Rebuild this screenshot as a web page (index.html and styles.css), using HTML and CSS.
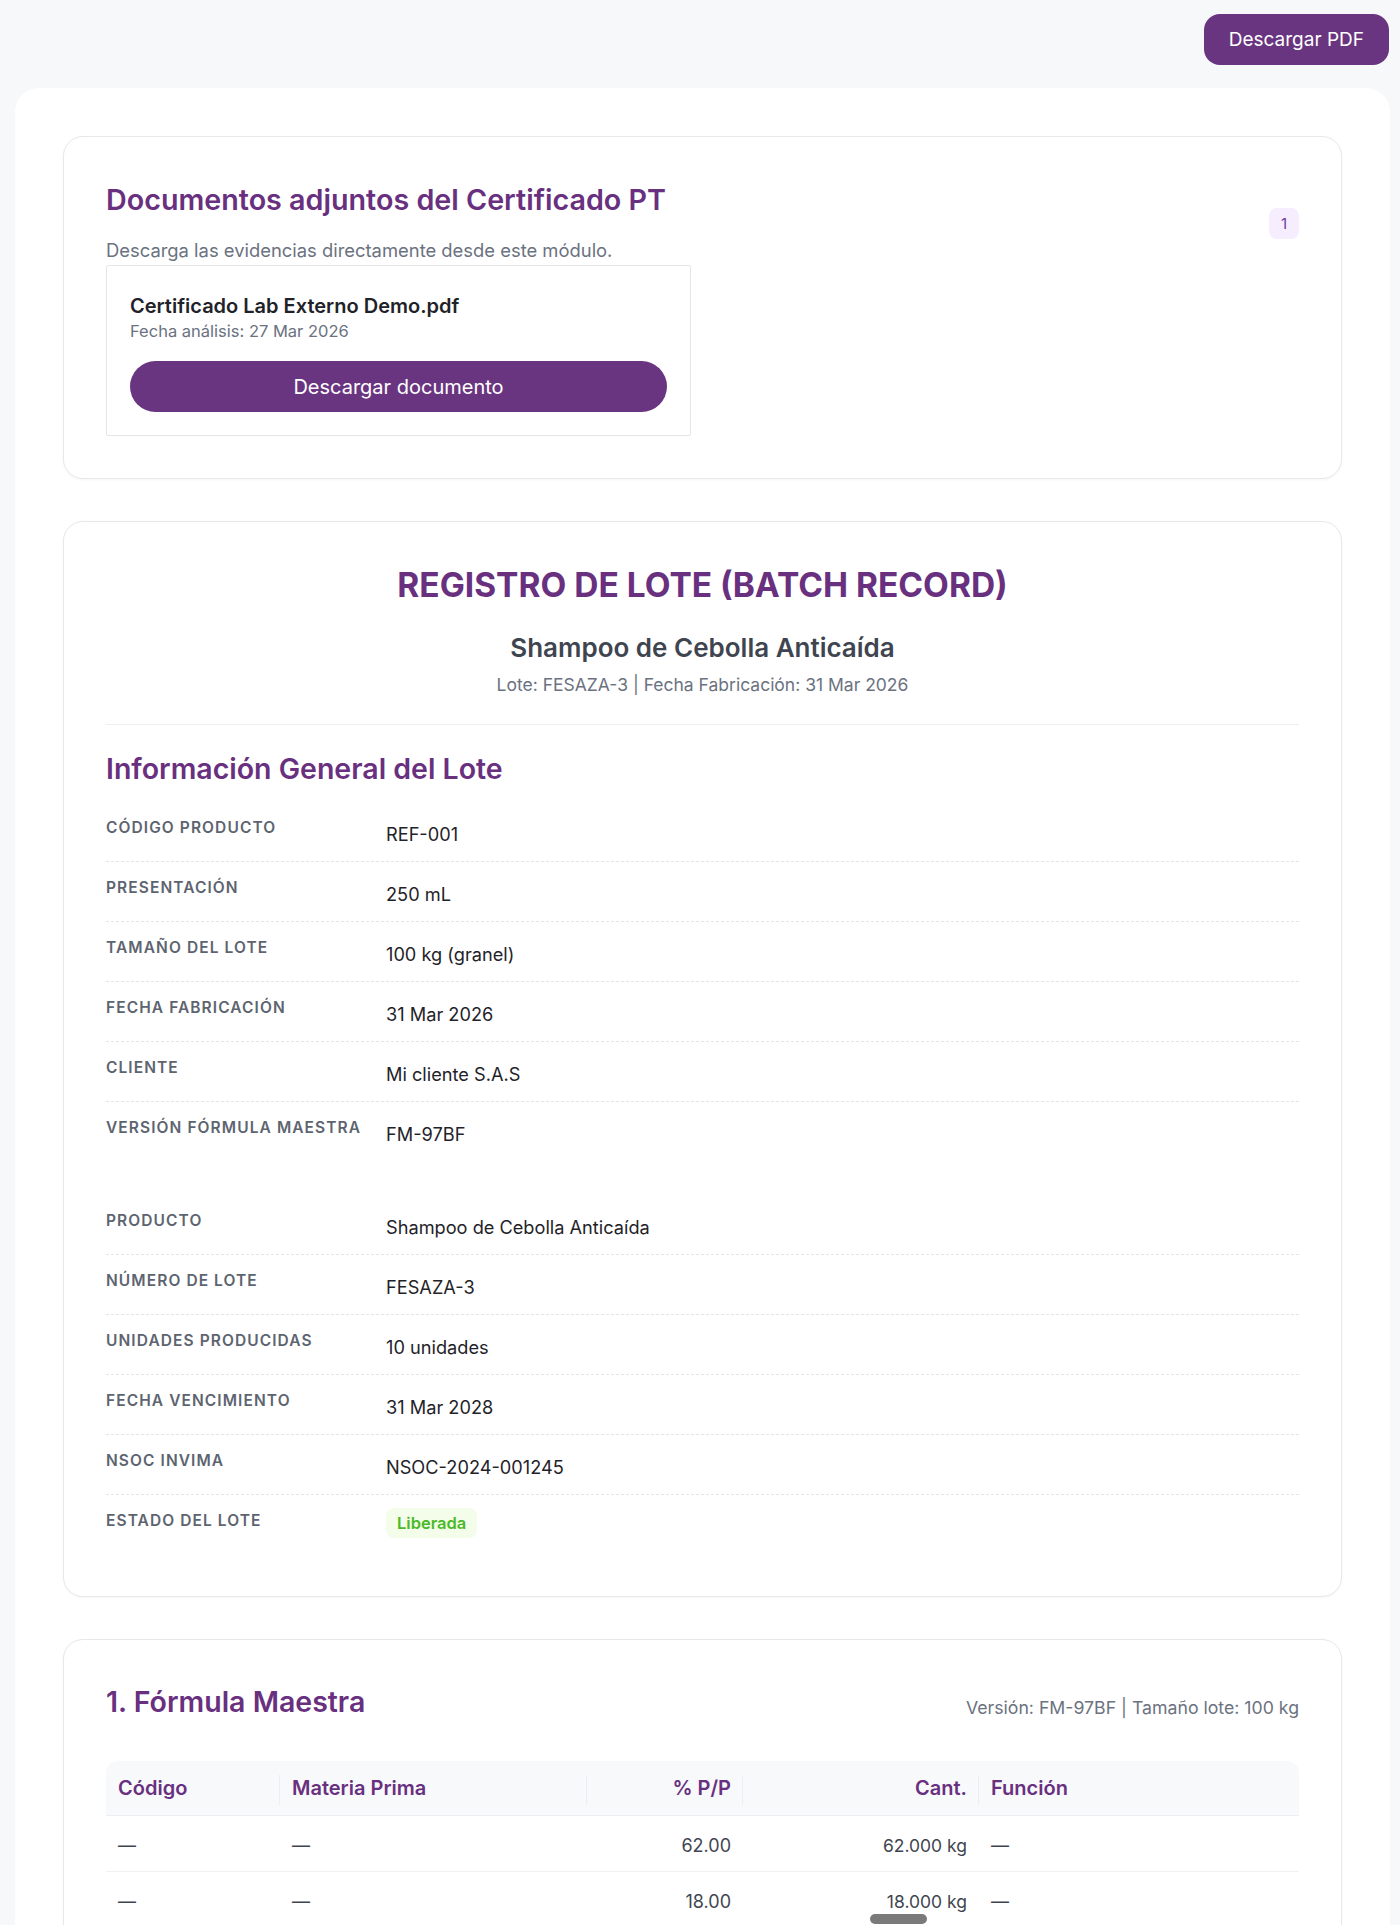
FILE: index.html
```html
<!DOCTYPE html>
<html lang="es">
<head>
  <meta charset="UTF-8" />
  <meta name="viewport" content="width=device-width, initial-scale=1.0" />
  <title>Registro de Lote - FESAZA-3</title>
  <link rel="stylesheet" href="styles.css">
</head>
<body>
  <div class="topbar">
    <button class="btn btn-pdf">Descargar PDF</button>
  </div>

  <main class="sheet">
    <!-- Adjuntos del certificado -->
    <section class="card">
      <div class="card-head">
        <div>
          <h2 class="card-title">Documentos adjuntos del Certificado PT</h2>
          <p class="card-sub">Descarga las evidencias directamente desde este módulo.</p>
        </div>
        <span class="count">1</span>
      </div>
      <div class="doc">
        <div class="doc-name">Certificado Lab Externo Demo.pdf</div>
        <div class="doc-date">Fecha análisis: 27 Mar 2026</div>
        <button class="btn btn-doc">Descargar documento</button>
      </div>
    </section>

    <!-- Encabezado del batch record -->
    <section class="card">
      <div class="record-head">
        <h1 class="record-title">REGISTRO DE LOTE (BATCH RECORD)</h1>
        <div class="record-product">Shampoo de Cebolla Anticaída</div>
        <div class="record-meta">Lote: FESAZA-3 | Fecha Fabricación: 31 Mar 2026</div>
      </div>

      <h2 class="section-title">Información General del Lote</h2>

      <dl class="info">
        <div class="info-row"><dt>Código Producto</dt><dd>REF-001</dd></div>
        <div class="info-row"><dt>Presentación</dt><dd>250 mL</dd></div>
        <div class="info-row"><dt>Tamaño del Lote</dt><dd>100 kg (granel)</dd></div>
        <div class="info-row"><dt>Fecha Fabricación</dt><dd>31 Mar 2026</dd></div>
        <div class="info-row"><dt>Cliente</dt><dd>Mi cliente S.A.S</dd></div>
        <div class="info-row"><dt>Versión Fórmula Maestra</dt><dd>FM-97BF</dd></div>
      </dl>

      <dl class="info">
        <div class="info-row"><dt>Producto</dt><dd>Shampoo de Cebolla Anticaída</dd></div>
        <div class="info-row"><dt>Número de Lote</dt><dd>FESAZA-3</dd></div>
        <div class="info-row"><dt>Unidades Producidas</dt><dd>10 unidades</dd></div>
        <div class="info-row"><dt>Fecha Vencimiento</dt><dd>31 Mar 2028</dd></div>
        <div class="info-row"><dt>NSOC INVIMA</dt><dd>NSOC-2024-001245</dd></div>
        <div class="info-row"><dt>Estado del Lote</dt><dd><span class="tag-ok">Liberada</span></dd></div>
      </dl>
    </section>

    <!-- 1. Formula maestra -->
    <section class="card">
      <div class="section-head">
        <h2 class="section-title">1. Fórmula Maestra</h2>
        <span class="section-meta">Versión: FM-97BF | Tamaño lote: 100 kg</span>
      </div>

      <table class="formula">
        <colgroup>
          <col style="width: 174px">
          <col style="width: 307px">
          <col style="width: 156px">
          <col style="width: 236px">
          <col>
        </colgroup>
        <thead>
          <tr>
            <th>Código</th>
            <th>Materia Prima</th>
            <th class="num">% P/P</th>
            <th class="num">Cant.</th>
            <th>Función</th>
          </tr>
        </thead>
        <tbody>
          <tr>
            <td>—</td>
            <td>—</td>
            <td class="num">62.00</td>
            <td class="num qty">62.000 kg</td>
            <td>—</td>
          </tr>
          <tr>
            <td>—</td>
            <td>—</td>
            <td class="num">18.00</td>
            <td class="num qty">18.000 kg</td>
            <td>—</td>
          </tr>
        </tbody>
      </table>
    </section>
  </main>

  <div class="scroll-thumb"></div>
</body>
</html>
```

FILE: styles.css
```css
html, body {
  height: 100%;
}
body {
  margin: 0;
  overflow: hidden;
  background: #f7f8fa;
  font-family: Inter, "Noto Sans", Arial, sans-serif;
  color: #1f2329;
}
h1, h2, p, dl, dd {
  margin: 0;
}

.btn {
  font-family: inherit;
  border: none;
  color: #fff;
  background: #6a3580;
  cursor: pointer;
}

.topbar {
  display: flex;
  justify-content: flex-end;
  padding: 14px 11px 0;
}
.btn-pdf {
  height: 51px;
  padding: 0 25px;
  border-radius: 16px;
  font-size: 19px;
}

.sheet {
  margin: 23px 10px 0 15px;
  padding: 48px 48px 60px;
  background: #fff;
  border-radius: 24px 24px 0 0;
}

.card {
  border: 1px solid #e6e8ec;
  border-radius: 20px;
  padding: 42px;
  margin-bottom: 42px;
  background: #fff;
  box-shadow: 0 1px 3px rgba(17, 24, 39, 0.04);
}

/* documentos adjuntos */
.card-head {
  display: flex;
  justify-content: space-between;
  align-items: center;
  padding-top: 4px;
}
.card-title {
  font-size: 28.7px;
  line-height: 1.2;
  font-weight: 600;
  color: #68307f;
}
.card-sub {
  margin-top: 20px;
  font-size: 18.4px;
  line-height: 27px;
  color: #6b7280;
}
.count {
  width: 30px;
  height: 31px;
  border-radius: 8px;
  background: #f6edff;
  color: #6b3fa0;
  font-size: 15px;
  display: flex;
  align-items: center;
  justify-content: center;
}
.doc {
  width: 585px;
  box-sizing: border-box;
  margin-top: 1px;
  padding: 26px 23px 23px;
  border: 1px solid #e4e6ea;
  border-radius: 2px;
}
.doc-name {
  font-size: 20px;
  line-height: 28px;
  font-weight: 600;
  color: #1f2329;
}
.doc-date {
  font-size: 16.5px;
  line-height: 22px;
  color: #6b7280;
}
.btn-doc {
  display: block;
  width: 100%;
  height: 51px;
  margin-top: 19px;
  border-radius: 26px;
  font-size: 20px;
}

/* cabecera del registro */
.record-head {
  text-align: center;
  padding-bottom: 26px;
  border-bottom: 1px solid #eceef1;
}
.record-title {
  margin-top: 1px;
  font-size: 33.5px;
  line-height: 1.2;
  font-weight: 700;
  color: #68307f;
}
.record-product {
  margin-top: 25px;
  font-size: 26px;
  line-height: 1.3;
  font-weight: 600;
  color: #3f4550;
}
.record-meta {
  margin-top: 7px;
  font-size: 17.5px;
  line-height: 27px;
  color: #6b7280;
}

.section-title {
  font-size: 28.5px;
  line-height: 1.3;
  font-weight: 600;
  color: #68307f;
}
.record-head + .section-title {
  margin-top: 25px;
}

/* filas de informacion */
.info {
  margin-top: 15px;
}
.info + .info {
  margin-top: 34px;
}
.info-row {
  display: grid;
  grid-template-columns: 280px 1fr;
  align-items: start;
  padding: 16px 0 11px;
  border-bottom: 1px dashed #e2e4e8;
}
.info-row:last-child {
  border-bottom: none;
  padding-bottom: 11px;
}
.info dt {
  font-size: 15.5px;
  line-height: 20px;
  font-weight: 600;
  text-transform: uppercase;
  letter-spacing: 0.07em;
  color: #5d6470;
}
.info dd {
  font-size: 18.2px;
  line-height: 32px;
  color: #1f2329;
}
.tag-ok {
  display: inline-block;
  margin-top: -3px;
  padding: 5px 11px;
  border-radius: 8px;
  background: #f3fdea;
  color: #4cb928;
  font-size: 16.5px;
  line-height: 20px;
  font-weight: 600;
  vertical-align: top;
}

/* formula maestra */
.section-head {
  display: flex;
  justify-content: space-between;
  align-items: flex-end;
  margin-top: 1px;
}
.section-meta {
  font-size: 17.7px;
  line-height: 26px;
  color: #6b7280;
}
.formula {
  width: 100%;
  margin-top: 40px;
  table-layout: fixed;
  border-collapse: separate;
  border-spacing: 0;
  font-size: 18px;
}
.formula th {
  position: relative;
  padding: 15px 12px 14px;
  font-size: 20px;
  line-height: 25px;
  text-align: left;
  font-weight: 600;
  color: #68307f;
  background: #f8f9fb;
  border-bottom: 1px solid #eceef1;
}
.formula th:first-child {
  border-top-left-radius: 12px;
}
.formula th:last-child {
  border-top-right-radius: 12px;
}
.formula th:not(:last-child)::after {
  content: "";
  position: absolute;
  right: 0;
  top: 14px;
  bottom: 10px;
  width: 1px;
  background: #eceef1;
}
.formula td {
  padding: 17px 12px 13px;
  line-height: 25px;
  color: #3f4550;
  border-bottom: 1px solid #f0f1f3;
}
.formula .num {
  text-align: right;
}
.formula td.qty {
  font-size: 17.5px;
}

.scroll-thumb {
  position: fixed;
  left: 870px;
  bottom: 1px;
  width: 57px;
  height: 10px;
  border-radius: 5px;
  background: #7a7a7a;
}
```
